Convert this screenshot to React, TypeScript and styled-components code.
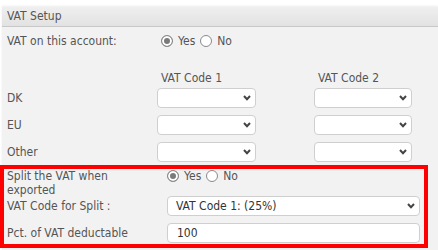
import * as React from "react";
import styled, { createGlobalStyle } from "styled-components";

const GlobalStyle = createGlobalStyle`
  html, body {
    margin: 0;
    padding: 0;
    background: #fff;
  }
  body {
    font-family: "DejaVu Sans Condensed", "DejaVu Sans", sans-serif;
    font-size: 12px;
    color: #555;
  }
`;

const Panel = styled.div`
  margin: 7px 0 0 2px;
  height: 243px;
  background: #f2f2f2;
  box-shadow: 0 -1px 2px rgba(0, 0, 0, 0.08);
`;

const Header = styled.div`
  height: 19px;
  line-height: 19px;
  padding-left: 5px;
  background: linear-gradient(#efefef, #e2e2e2);
  border-bottom: 1px solid #c8c8c8;
`;

const Body = styled.div`
  padding: 4px 0 0 5px;
`;

const Row = styled.div`
  display: flex;
  align-items: center;
  height: 20px;
`;

const Label = styled.div<{ $w?: number }>`
  width: ${(p) => p.$w ?? 150}px;
  flex-shrink: 0;
`;

const RadioGroup = styled.div<{ $indent?: number }>`
  display: flex;
  align-items: center;
  gap: 5px;
  padding-left: ${(p) => p.$indent ?? 4}px;
`;

const Radio = styled.input.attrs({ type: "radio" })`
  appearance: none;
  margin: 0;
  width: 12px;
  height: 12px;
  border: 1px solid #8a8a8a;
  border-radius: 50%;
  background: #fff;
  &:checked {
    background: #7a7a7a;
    box-shadow: inset 0 0 0 2px #fff;
  }
`;

const Choice = styled.label`
  display: flex;
  align-items: center;
  gap: 5px;
`;

const CodeGrid = styled.div`
  margin-top: 16px;
  display: grid;
  grid-template-columns: 150px 99px 58px 98px;
  grid-template-rows: 14px 20px 20px 20px;
  row-gap: 7px;
  align-items: center;
`;

const ColHead = styled.div<{ $col: number }>`
  grid-column: ${(p) => p.$col};
  padding-left: 4px;
  align-self: end;
  line-height: 14px;
  margin-bottom: -4px;
`;

const SelectWrap = styled.div<{ $col?: number }>`
  position: relative;
  height: 20px;
  ${(p) => (p.$col ? `grid-column: ${p.$col};` : "")}
`;

const Select = styled.select`
  appearance: none;
  box-sizing: border-box;
  width: 100%;
  height: 20px;
  margin: 0;
  padding: 0 20px 0 8px;
  border: 1px solid #cfcfcf;
  border-radius: 4px;
  background: #fff;
  font: inherit;
  color: #333;
  outline: none;
`;

const Chevron = styled.svg`
  position: absolute;
  right: 5px;
  top: 7px;
  width: 8px;
  height: 6px;
  pointer-events: none;
`;

const TextInput = styled.input`
  box-sizing: border-box;
  width: 100%;
  height: 20px;
  margin: 0;
  padding: 0 9px;
  border: 1px solid #cfcfcf;
  border-radius: 4px;
  background: #fff;
  font: inherit;
  color: #333;
  outline: none;
`;

const Highlight = styled.div`
  margin: 3px 0 0 -7px;
  width: 428px;
  box-sizing: border-box;
  border: 4px solid #f00;
  padding: 0 4px 1px 3px;
  display: grid;
  grid-template-columns: 160px 253px;
  grid-template-rows: 27px 27px 20px;
  align-items: start;
`;

const WrapLabel = styled.div`
  width: 150px;
  line-height: 14px;
`;

const FieldLabel = styled.div`
  line-height: 20px;
`;

const RadioLine = styled.div`
  height: 14px;
  display: flex;
  align-items: center;
`;

const DropDown = ({ col, value }: { col?: number; value?: string }) => (
  <SelectWrap $col={col}>
    <Select defaultValue={value ?? ""}>
      <option value="">{""}</option>
      {value && <option value={value}>{value}</option>}
    </Select>
    <Chevron viewBox="0 0 8 6">
      <polyline
        points="1,1 4,4.2 7,1"
        fill="none"
        stroke="#444"
        strokeWidth="2"
      />
    </Chevron>
  </SelectWrap>
);

const YesNo = ({ name }: { name: string }) => (
  <>
    <Choice>
      <Radio name={name} defaultChecked />
      Yes
    </Choice>
    <Choice>
      <Radio name={name} />
      No
    </Choice>
  </>
);

const regions = ["DK", "EU", "Other"];

const App = () => (
  <>
    <GlobalStyle />
    <Panel>
      <Header>VAT Setup</Header>
      <Body>
        <Row>
          <Label>VAT on this account:</Label>
          <RadioGroup>
            <YesNo name="vat" />
          </RadioGroup>
        </Row>
        <CodeGrid>
          <ColHead $col={2}>VAT Code 1</ColHead>
          <ColHead $col={4}>VAT Code 2</ColHead>
          {regions.map((r) => (
            <React.Fragment key={r}>
              <Label>{r}</Label>
              <DropDown col={2} />
              <DropDown col={4} />
            </React.Fragment>
          ))}
        </CodeGrid>
        <Highlight>
          <WrapLabel>Split the VAT when exported</WrapLabel>
          <RadioLine>
            <RadioGroup $indent={0}>
              <YesNo name="split" />
            </RadioGroup>
          </RadioLine>
          <FieldLabel>VAT Code for Split :</FieldLabel>
          <DropDown value="VAT Code 1: (25%)" />
          <FieldLabel>Pct. of VAT deductable</FieldLabel>
          <TextInput defaultValue="100" />
        </Highlight>
      </Body>
    </Panel>
  </>
);

export default App;
